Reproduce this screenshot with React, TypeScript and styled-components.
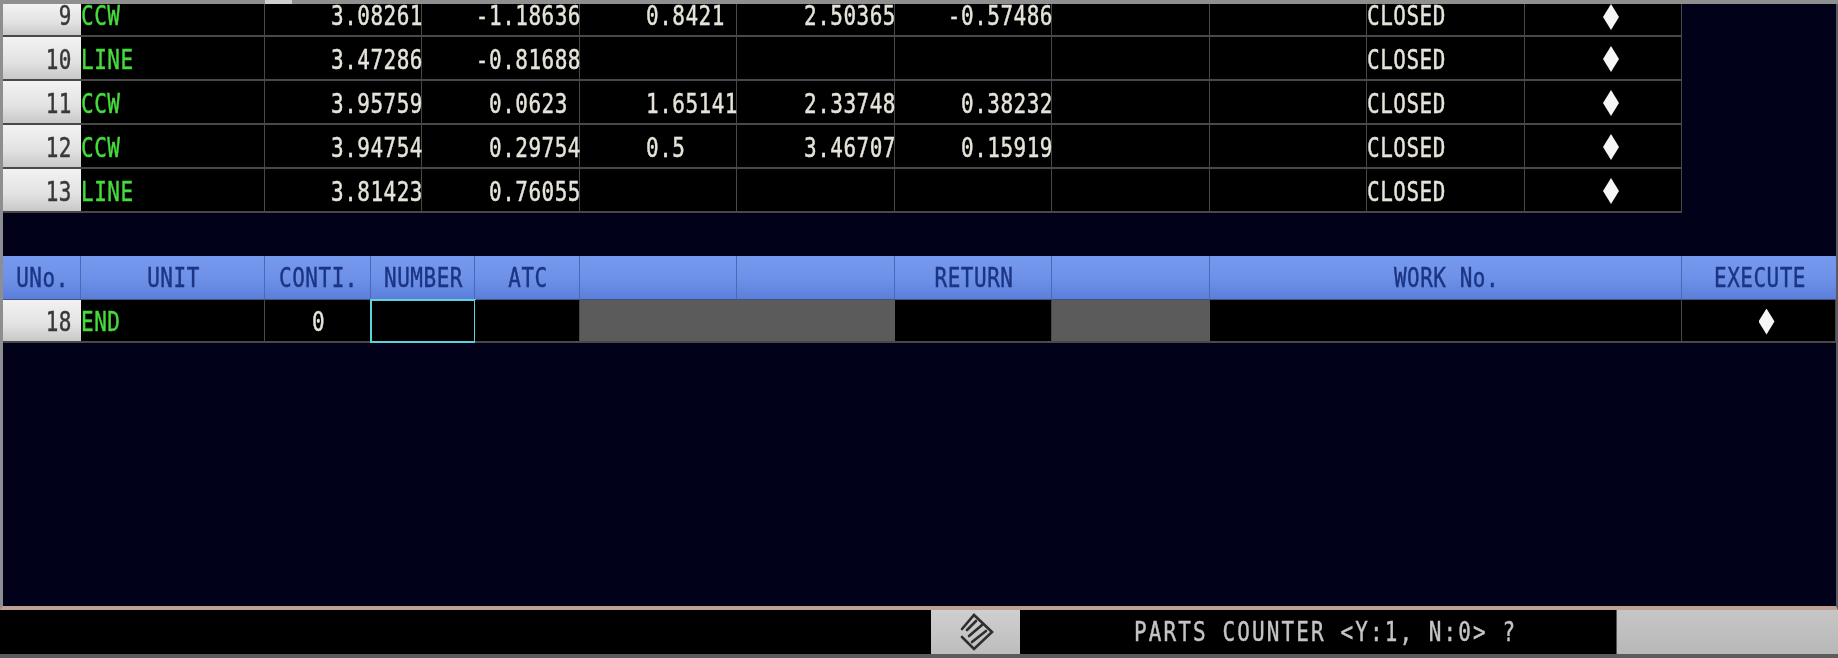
import React from "react";
import styled, { createGlobalStyle } from "styled-components";

const Global = createGlobalStyle`
  html, body { margin: 0; padding: 0; height: 100%; background: #000; overflow: hidden; }
  #root { height: 100%; }
`;

const listColumns = "78px 184px 157px 158px 157px 158px 157px 158px 157px 158px 157px";
const unitColumns = "78px 184px 106px 104px 105px 157px 158px 157px 158px 472px 1fr";

const Screen = styled.div`
  height: 658px;
  width: 1838px;
  display: flex;
  flex-direction: column;
  background: #000;
  font-family: "DejaVu Sans Mono", "Liberation Mono", monospace;
  font-size: 21px;
  letter-spacing: 0.5px;
  color: #e6e4da;
  -webkit-text-stroke: 0.35px currentColor;
  filter: blur(0.55px);
`;

const TopStrip = styled.div`
  height: 4px;
  flex: none;
  display: grid;
  grid-template-columns: 265px 27px 1fr;
`;

const StripPart = styled.div<{ $light?: boolean }>`
  background: ${(p) => (p.$light ? "#cfcfcf" : "#8f8f8f")};
`;

const Panel = styled.div`
  flex: 1;
  min-height: 0;
  display: flex;
  flex-direction: column;
  background: #01011a;
  border-left: 3px solid #8e8e92;
  border-right: 2px solid #5a5a60;
  border-bottom: 4px solid #bfa095;
`;

const ListBody = styled.div`
  flex: none;
`;

const Mark = styled.span`
  display: block;
  width: 16px;
  height: 26px;
  margin: 2px 0 0 16px;
  background: #f6f6f6;
  clip-path: polygon(50% 0, 100% 50%, 50% 100%, 0 50%);
`;

const Row = styled.div<{ $columns: string; $height?: number; $clipped?: boolean }>`
  display: grid;
  grid-template-columns: ${(p) => p.$columns};
  height: ${(p) => p.$height ?? 44}px;
  && > * {
    align-items: ${(p) => (p.$clipped ? "flex-start" : "center")};
  }
  && ${Mark} {
    margin-top: ${(p) => (p.$clipped ? 0 : 2)}px;
  }
`;

const Cell = styled.div<{ $align?: string; $disabled?: boolean; $span?: number }>`
  display: flex;
  align-items: center;
  justify-content: ${(p) => p.$align ?? "flex-end"};
  box-sizing: border-box;
  background: ${(p) => (p.$disabled ? "#5b5b5b" : "#000")};
  border-right: ${(p) => (p.$disabled ? "0" : "1px solid #484848")};
  border-bottom: 2px solid #484848;
  white-space: pre;
  grid-column: ${(p) => (p.$span ? `span ${p.$span}` : "auto")};
`;

const Glyphs = styled.span`
  display: inline-block;
  transform: translateY(2px) scaleY(1.28);
  line-height: 1;
  margin-right: -2px;
`;

const NumberCell = styled.div`
  display: flex;
  align-items: center;
  justify-content: flex-end;
  box-sizing: border-box;
  padding-right: 11px;
  background: linear-gradient(180deg, #f2f2f2 0%, #e2e2e2 60%, #c8c8c8 100%);
  border-bottom: 2px solid #484848;
  color: #383838;
`;

const UnitName = styled(Cell).attrs({ $align: "flex-start" })`
  color: #46dc3c;
`;

const Gap = styled.div`
  height: 43px;
  flex: none;
`;

const HeadRow = styled.div`
  display: grid;
  grid-template-columns: ${unitColumns};
  height: 44px;
  flex: none;
  background: linear-gradient(180deg, #7599ee 0%, #6f92e8 50%, #5b7edb 100%);
  border-bottom: 1px solid #45537c;
  box-sizing: border-box;
`;

const HeadCell = styled.div`
  display: flex;
  align-items: center;
  justify-content: center;
  padding-bottom: 2px;
  border-right: 1px solid #4b69b4;
  color: #1b3584;
  &:last-child { border-right: 0; }
`;

const Cursor = styled(Cell)`
  border: 2px solid #5ed2d8;
  margin: -1px -1px 0;
`;

const StatusBar = styled.div`
  height: 48px;
  flex: none;
  display: grid;
  grid-template-columns: 931px 89px 597px 1fr;
  background: #000;
  border-bottom: 4px solid #5c5c5c;
  box-sizing: border-box;
`;

const Empty = styled.div`
  background: #000;
`;

const ModeButton = styled.div`
  display: flex;
  align-items: center;
  justify-content: center;
  background: linear-gradient(180deg, #cfcfcf, #bdbdbd);
`;

const Message = styled.div`
  display: flex;
  align-items: center;
  padding: 0 0 4px 114px;
  letter-spacing: 2.1px;
  color: #c4c4c4;
  border-right: 1px solid #555;
`;

const FillButton = styled.div`
  background: linear-gradient(180deg, #c6c6c6, #b8b8b8);
`;

type ListRow = {
  no: number;
  unit: string;
  values: string[];
};

const rows: ListRow[] = [
  { no: 9, unit: "CCW", values: ["3.08261", "-1.18636", "0.8421 ", "2.50365", "-0.57486"] },
  { no: 10, unit: "LINE", values: ["3.47286", "-0.81688", "", "", ""] },
  { no: 11, unit: "CCW", values: ["3.95759", "0.0623 ", "1.65141", "2.33748", "0.38232"] },
  { no: 12, unit: "CCW", values: ["3.94754", "0.29754", "0.5    ", "3.46707", "0.15919"] },
  { no: 13, unit: "LINE", values: ["3.81423", "0.76055", "", "", ""] },
];

const heads = ["UNo.", "UNIT", "CONTI.", "NUMBER", "ATC", "", "", "RETURN", "", "WORK No.", "EXECUTE"];

const ModeIcon = () => (
  <svg width="56" height="40" viewBox="-1 4 56 40" fill="none" stroke="#2e2e2e" strokeWidth="2.6" strokeLinecap="round">
    <path d="M13 21 L25 7 L43 24 L25 41 L13 29" />
    <path d="M18 22 L27 13" />
    <path d="M20 28 L33 17" />
    <path d="M23 34 L37 23" />
  </svg>
);

export default function App() {
  return (
    <Screen>
      <Global />
      <TopStrip>
        <StripPart />
        <StripPart $light />
        <StripPart />
      </TopStrip>
      <Panel>
        <ListBody>
          {rows.map((r, i) => (
            <Row key={r.no} $columns={listColumns} $height={i === 0 ? 33 : 44} $clipped={i === 0}>
              <NumberCell><Glyphs>{r.no}</Glyphs></NumberCell>
              <UnitName><Glyphs>{r.unit}</Glyphs></UnitName>
              {r.values.map((v, j) => (
                <Cell key={j}><Glyphs>{v}</Glyphs></Cell>
              ))}
              <Cell />
              <Cell />
              <Cell $align="flex-start"><Glyphs>CLOSED</Glyphs></Cell>
              <Cell $align="center"><Mark /></Cell>
            </Row>
          ))}
        </ListBody>
        <Gap />
        <HeadRow>
          {heads.map((h, i) => (
            <HeadCell key={i}><Glyphs>{h}</Glyphs></HeadCell>
          ))}
        </HeadRow>
        <Row $columns={unitColumns} $height={43}>
          <NumberCell><Glyphs>18</Glyphs></NumberCell>
          <UnitName><Glyphs>END</Glyphs></UnitName>
          <Cell $align="center"><Glyphs>0</Glyphs></Cell>
          <Cursor />
          <Cell />
          <Cell $disabled $span={2} />
          <Cell />
          <Cell $disabled />
          <Cell />
          <Cell $align="center"><Mark /></Cell>
        </Row>
      </Panel>
      <StatusBar>
        <Empty />
        <ModeButton><ModeIcon /></ModeButton>
        <Message><Glyphs>PARTS COUNTER &lt;Y:1, N:0&gt; ?</Glyphs></Message>
        <FillButton />
      </StatusBar>
    </Screen>
  );
}
